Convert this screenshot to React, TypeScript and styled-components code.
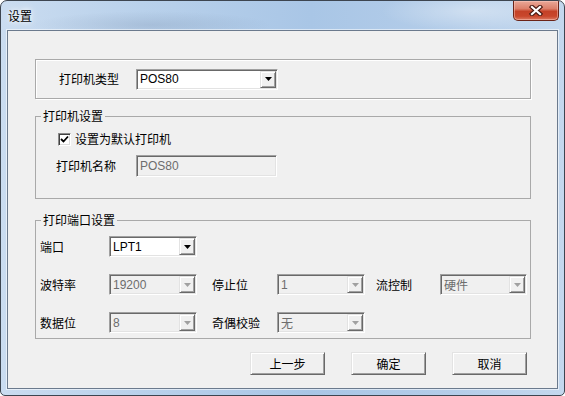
import React from 'react'
import styled, { createGlobalStyle } from 'styled-components'

const GlobalStyle = createGlobalStyle`
  html, body {
    margin: 0;
    padding: 0;
    background: #ffffff;
  }
  body {
    font-family: "Noto Sans CJK SC", "Liberation Sans", sans-serif;
    font-size: 12px;
    color: #000;
  }
`

const Window = styled.div`
  box-sizing: border-box;
  width: 565px;
  height: 396px;
  display: flex;
  flex-direction: column;
  border: 1px solid #3d4550;
  border-radius: 7px 7px 5px 5px;
  padding: 0 6px 6px 6px;
  overflow: hidden;
  background:
    radial-gradient(ellipse 120px 14px at 150px 24px, rgba(90, 110, 140, 0.18), transparent),
    radial-gradient(ellipse 90px 20px at 470px 10px, rgba(255, 255, 255, 0.35), transparent),
    linear-gradient(to right, #cadcf0 0%, #b9d1eb 25%, #a9c6e6 55%, #b4cde9 80%, #c4d8ee 100%);
`

const TitleBar = styled.div`
  height: 29px;
  display: flex;
  align-items: flex-start;
`

const TitleText = styled.span`
  margin: 7px 0 0 1px;
  font-size: 12px;
  line-height: 16px;
  color: #000;
  text-shadow: 0 0 4px #ffffff, 0 0 8px rgba(255, 255, 255, 0.9);
`

const CloseButton = styled.div`
  box-sizing: border-box;
  margin-left: auto;
  margin-right: -1px;
  width: 46px;
  height: 20px;
  display: flex;
  align-items: center;
  justify-content: center;
  border: 1px solid #6b2418;
  border-top: none;
  border-radius: 0 0 5px 5px;
  background: linear-gradient(to bottom, #e9a898 0%, #dc806b 40%, #c44127 55%, #c9472c 80%, #dc7a62 100%);
  box-shadow: inset 0 0 0 1px rgba(255, 210, 200, 0.45);
`

const Client = styled.div`
  flex: 1;
  display: flex;
  flex-direction: column;
  background: #f0f0f0;
  border: 1px solid #6b7a8d;
  box-shadow: 0 0 0 1px rgba(255, 255, 255, 0.55);
  padding: 28px 26px 0 27px;
`

const PlainGroup = styled.div`
  box-sizing: border-box;
  height: 40px;
  display: flex;
  align-items: center;
  border: 1px solid #a9a9a9;
  box-shadow: inset 1px 1px 0 #ffffff, 1px 1px 0 #ffffff;
  padding-left: 23px;
`

const Group = styled.fieldset<{ $top: number }>`
  margin: ${p => p.$top}px 0 0 0;
  padding: 0;
  min-width: 0;
  border: 1px solid #a9a9a9;
`

const GroupTitle = styled.legend`
  margin-left: 5px;
  padding: 0 2px;
  font-size: 12px;
  line-height: 14px;
`

const SettingsBody = styled.div`
  display: flex;
  flex-direction: column;
  gap: 8px;
  padding: 8px 0 21px 20px;
`

const Row = styled.div`
  display: flex;
  align-items: center;
`

const CheckRow = styled.label`
  display: flex;
  align-items: center;
  gap: 4px;
  height: 16px;
  margin-left: 2px;
`

const CheckBox = styled.span`
  box-sizing: border-box;
  width: 13px;
  height: 13px;
  display: flex;
  align-items: center;
  justify-content: center;
  background: #fff;
  border: 1px solid;
  border-color: #8a8a8a #ffffff #ffffff #8a8a8a;
  box-shadow: inset 1px 1px 0 #404040, inset -1px -1px 0 #dcdcdc;
`

const Label = styled.span<{ $width?: number; $indent?: number }>`
  box-sizing: border-box;
  width: ${p => (p.$width ? `${p.$width}px` : 'auto')};
  padding-left: ${p => p.$indent ?? 0}px;
  font-size: 12px;
  line-height: 16px;
  white-space: nowrap;
`

const PortGrid = styled.div`
  display: grid;
  grid-template-columns: 69px 88px 80px 88px 75px 87px;
  grid-auto-rows: 21px;
  row-gap: 17px;
  align-items: center;
  padding: 9px 0 5px 4px;
`

const Field = styled.div<{ $width: number; $height?: number; $disabled?: boolean }>`
  box-sizing: border-box;
  width: ${p => p.$width}px;
  height: ${p => p.$height ?? 21}px;
  display: flex;
  align-items: stretch;
  padding: 1px;
  border: 1px solid;
  border-color: #a0a0a0 #ffffff #ffffff #a0a0a0;
  box-shadow: inset 1px 1px 0 #696969, inset -1px -1px 0 #e3e3e3;
  background: ${p => (p.$disabled ? '#f0f0f0' : '#ffffff')};
`

const FieldText = styled.span<{ $disabled?: boolean }>`
  flex: 1;
  padding-left: 2px;
  display: flex;
  align-items: center;
  font-family: "Liberation Sans", "Noto Sans CJK SC", sans-serif;
  font-size: 12px;
  color: ${p => (p.$disabled ? '#6d6d6d' : '#000000')};
  white-space: nowrap;
  overflow: hidden;
`

const DropButton = styled.span`
  box-sizing: border-box;
  width: 16px;
  display: flex;
  align-items: center;
  justify-content: center;
  background: #f0f0f0;
  border: 1px solid;
  border-color: #e3e3e3 #696969 #696969 #e3e3e3;
  box-shadow: inset 1px 1px 0 #ffffff, inset -1px -1px 0 #a0a0a0;
`

const ButtonRow = styled.div`
  display: flex;
  justify-content: flex-end;
  gap: 26px;
  margin-top: 13px;
  padding-right: 4px;
`

const Button = styled.button`
  box-sizing: border-box;
  width: 75px;
  height: 23px;
  padding: 0;
  font-family: "Noto Sans CJK SC", "Liberation Sans", sans-serif;
  font-size: 12px;
  line-height: 16px;
  color: #000;
  background: #f0f0f0;
  border: 1px solid;
  border-color: #e3e3e3 #696969 #696969 #e3e3e3;
  box-shadow: inset 1px 1px 0 #ffffff, inset -1px -1px 0 #a0a0a0;
`

const CloseIcon = () => (
  <svg width="14" height="11" viewBox="0 0 14 11">
    <path d="M3 2 L11 9 M11 2 L3 9" stroke="#4a1a12" strokeWidth="4.4" strokeLinecap="square" fill="none" />
    <path d="M3 2 L11 9 M11 2 L3 9" stroke="#ffffff" strokeWidth="2.2" strokeLinecap="square" fill="none" />
  </svg>
)

const CheckMark = () => (
  <svg width="9" height="9" viewBox="0 0 9 9">
    <path d="M1 4 L3.5 6.5 L8 1.5" stroke="#000" strokeWidth="1.8" fill="none" />
  </svg>
)

const Arrow = ({ disabled }: { disabled?: boolean }) => (
  <svg width="7" height="4" viewBox="0 0 7 4">
    <polygon points="0,0 7,0 3.5,4" fill={disabled ? '#a0a0a0' : '#000'} />
  </svg>
)

type ComboProps = { value: string; width: number; disabled?: boolean }

const Combo = ({ value, width, disabled }: ComboProps) => (
  <Field $width={width} $disabled={disabled}>
    <FieldText $disabled={disabled}>{value}</FieldText>
    <DropButton>
      <Arrow disabled={disabled} />
    </DropButton>
  </Field>
)

export default function App() {
  return (
    <>
      <GlobalStyle />
      <Window>
        <TitleBar>
          <TitleText>设置</TitleText>
          <CloseButton>
            <CloseIcon />
          </CloseButton>
        </TitleBar>
        <Client>
          <PlainGroup>
            <Label $width={77}>打印机类型</Label>
            <Combo value="POS80" width={142} />
          </PlainGroup>

          <Group $top={10}>
            <GroupTitle>打印机设置</GroupTitle>
            <SettingsBody>
              <CheckRow>
                <CheckBox>
                  <CheckMark />
                </CheckBox>
                <Label>设置为默认打印机</Label>
              </CheckRow>
              <Row>
                <Label $width={80}>打印机名称</Label>
                <Field $width={141} $height={22} $disabled>
                  <FieldText $disabled>POS80</FieldText>
                </Field>
              </Row>
            </SettingsBody>
          </Group>

          <Group $top={14}>
            <GroupTitle>打印端口设置</GroupTitle>
            <PortGrid>
              <Label>端口</Label>
              <Combo value="LPT1" width={88} />
              <span />
              <span />
              <span />
              <span />

              <Label>波特率</Label>
              <Combo value="19200" width={88} disabled />
              <Label $indent={15}>停止位</Label>
              <Combo value="1" width={88} disabled />
              <Label $indent={11}>流控制</Label>
              <Combo value="硬件" width={87} disabled />

              <Label>数据位</Label>
              <Combo value="8" width={88} disabled />
              <Label $indent={15}>奇偶校验</Label>
              <Combo value="无" width={88} disabled />
            </PortGrid>
          </Group>

          <ButtonRow>
            <Button>上一步</Button>
            <Button>确定</Button>
            <Button>取消</Button>
          </ButtonRow>
        </Client>
      </Window>
    </>
  )
}
